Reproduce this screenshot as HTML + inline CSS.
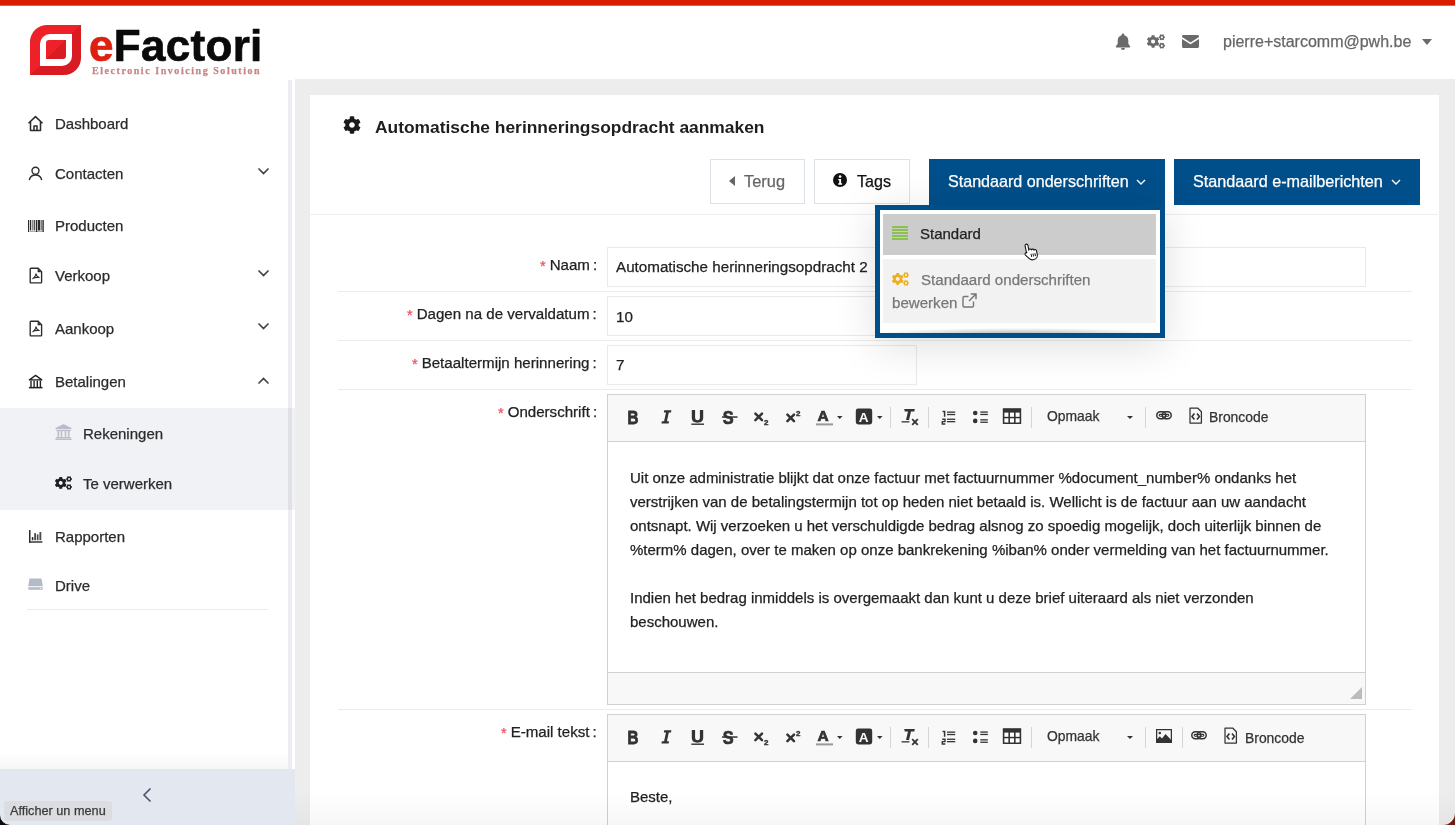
<!DOCTYPE html>
<html><head><meta charset="utf-8">
<style>
*{box-sizing:border-box;margin:0;padding:0}
html,body{width:1455px;height:825px;overflow:hidden;background:#fff;font-family:"Liberation Sans",sans-serif;color:#222}
body div{-webkit-text-stroke:0.25px currentColor}
.abs,.side,.lbl,.inp,.etxt,.tt{will-change:transform}
.abs{position:absolute}
#topbar{left:0;top:0;width:1455px;height:6px;background:linear-gradient(#d91e00 0,#d91e00 4px,#c81b00 5px,#f3b3a8 6px)}
#main{left:295px;top:79px;width:1160px;height:746px;background:#ededed}
#strip{left:288px;top:80px;width:4px;height:689px;background:rgba(0,20,60,0.075)}
#card{left:310px;top:95px;width:1129px;height:740px;background:#fff}
.side{left:55px;font-size:15px;color:#2b2b2b;white-space:nowrap;line-height:1}
.sico{position:absolute}
.chev{position:absolute;left:258px}
#sub{left:0;top:408px;width:295px;height:102px;background:#f1f2f6}
#sep{left:27px;top:609px;width:241px;height:1px;background:#e9ebef}
#bottombar{left:0;top:769px;width:295px;height:56px;background:#e3e7ef}
#tip{left:4px;top:801px;width:108px;height:20px;background:#dcdde0;border-radius:3px;font-size:12.7px;color:#3a3a3a;padding:3px 0 0 6px;white-space:nowrap}
.hdr{font-size:16px;color:#666;white-space:nowrap;line-height:1}
.btn{position:absolute;top:159px;height:45px;border:1px solid #dde0e6;background:#fff}
.bbtn{position:absolute;top:159px;height:46px;background:#004f8a;color:#fff;font-size:16.1px;white-space:nowrap}
.lbl{position:absolute;font-size:15.1px;color:#222;white-space:nowrap;line-height:1;text-align:right}
.lbl .ast{color:#e8535e;font-size:14.5px;margin-right:4px;position:relative;top:1px}
.lbl .col{margin-left:3px}
.hr{position:absolute;left:338px;width:1074px;height:1px;background:#ececec}
.inp{position:absolute;left:607px;height:40px;border:1px solid #e9eaee;background:#fff;font-size:15.2px;color:#222;padding-left:8px;line-height:1;white-space:nowrap}
.ed{position:absolute;left:607px;width:759px;border:1px solid #d1d1d1;background:#fff}
.tb{position:absolute;left:0;top:0;width:757px;height:47px;background:#f8f8f8;border-bottom:1px solid #d1d1d1}
.ico{position:absolute}
.tsep{position:absolute;top:13px;width:1px;height:20px;background:#d1d1d1}
.tt{position:absolute;font-size:13.9px;color:#333;white-space:nowrap;line-height:1}
.etxt{position:absolute;left:22px;font-size:15px;color:#222;line-height:24px;white-space:nowrap}
</style></head><body>
<div id="topbar" class="abs"></div>

<!-- logo -->
<svg class="abs" style="left:30px;top:24px" width="52" height="52" viewBox="0 0 52 52">
 <defs><linearGradient id="lg" x1="0" y1="0" x2="1" y2="1"><stop offset="0.5" stop-color="#ee2028"/><stop offset="0.5" stop-color="#d91c24"/></linearGradient></defs>
 <path d="M18 1 H51 V34 A17 17 0 0 1 34 51 H0 V18 A17 17 0 0 1 18 1 Z" fill="url(#lg)"/>
 <path d="M20 10 H42 V32 A10 10 0 0 1 32 42 H10 V20 A10 10 0 0 1 20 10 Z" fill="#fff"/>
 <path d="M19 16 H36 V32 A3 3 0 0 1 33 35 H16 V19 A3 3 0 0 1 19 16 Z" fill="url(#lg)"/>
</svg>
<div class="abs" style="left:89px;top:24px;font-size:44px;font-weight:bold;line-height:1;letter-spacing:0.3px;-webkit-text-stroke:0.7px currentColor;white-space:nowrap"><span style="color:#dd2010">e</span><span style="color:#0a0a0a;-webkit-text-stroke:0.7px #0a0a0a">Factori</span></div>
<div class="abs" style="left:92px;top:66px;font-family:'Liberation Serif',serif;font-size:10px;font-weight:bold;letter-spacing:1.55px;color:#c98585;white-space:nowrap;line-height:1">Electronic Invoicing Solution</div>

<!-- header right -->
<svg class="abs" style="left:1115px;top:33px" width="16" height="17" viewBox="0 0 16 17"><path d="M8 0.5c.8 0 1.3.6 1.3 1.3v.5c2.4.5 4 2.6 4 5.1v3.3l1.8 2.6c.3.5 0 1.2-.6 1.2H1.5c-.6 0-.9-.7-.6-1.2l1.8-2.6V7.4c0-2.5 1.6-4.6 4-5.1v-.5C6.7 1.1 7.2.5 8 .5zM6 15h4a2 2 0 0 1-4 0z" fill="#6a6a6a"/></svg>
<svg class="abs" style="left:1147px;top:34px" width="18" height="15" viewBox="0 0 640 512"><path fill="#6a6a6a" d="M512.1 191l-8.2 14.3c-3 5.3-9.4 7.5-15.1 5.4-11.8-4.4-22.6-10.7-32.1-18.6-4.6-3.8-5.8-10.5-2.8-15.7l8.2-14.3c-6.9-8-12.300-17.3-15.9-27.4h-16.5c-6 0-11.2-4.3-12.2-10.3-2-12-2.1-24.6 0-37.1 1-6 6.2-10.4 12.2-10.4h16.5c3.6-10.1 9-19.4 15.9-27.4l-8.2-14.3c-3-5.2-1.9-11.9 2.8-15.700 9.5-7.9 20.4-14.2 32.1-18.6 5.7-2.1 12.1.1 15.1 5.4l8.2 14.3c10.5-1.9 21.2-1.9 31.7 0L552 6.3c3-5.3 9.4-7.5 15.1-5.4 11.8 4.4 22.6 10.7 32.1 18.6 4.6 3.8 5.8 10.5 2.8 15.7l-8.2 14.3c6.9 8 12.3 17.3 15.9 27.4h16.5c6 0 11.2 4.3 12.2 10.3 2 12 2.1 24.6 0 37.1-1 6-6.2 10.4-12.2 10.4h-16.5c-3.6 10.1-9 19.4-15.9 27.4l8.2 14.3c3 5.2 1.9 11.9-2.8 15.7-9.5 7.9-20.4 14.2-32.1 18.6-5.7 2.1-12.1-.1-15.1-5.4l-8.2-14.3c-10.4 1.9-21.2 1.9-31.7 0zm-10.5-58.8c38.5 29.6 82.4-14.3 52.8-52.8-38.5-29.7-82.4 14.3-52.8 52.8zM386.3 286.1l33.7 16.8c10.1 5.8 14.5 18.1 10.5 29.1-8.9 24.2-26.4 46.4-42.6 65.8-7.4 8.9-20.2 11.1-30.3 5.3l-29.1-16.8c-16 13.7-34.6 24.6-54.9 31.7v33.6c0 11.6-8.3 21.6-19.7 23.6-24.6 4.2-50.4 4.4-75.9 0-11.5-2-20-11.9-20-23.6V418c-20.3-7.2-38.9-18-54.9-31.7L74 403c-10 5.8-22.9 3.6-30.3-5.3-16.2-19.4-33.3-41.6-42.2-65.7-4-10.9.4-23.2 10.5-29.1l33.3-16.8c-3.9-20.9-3.9-42.4 0-63.4L12 205.8c-10.1-5.8-14.6-18.1-10.5-29 8.9-24.2 26-46.4 42.2-65.8 7.4-8.9 20.2-11.1 30.3-5.3l29.1 16.8c16-13.7 34.6-24.6 54.9-31.7V57.1c0-11.5 8.2-21.5 19.6-23.5 24.6-4.2 50.5-4.4 76-.1 11.5 2 20 11.9 20 23.6v33.6c20.3 7.2 38.9 18 54.9 31.7l29.1-16.8c10-5.8 22.9-3.6 30.3 5.3 16.2 19.4 33.2 41.6 42.1 65.8 4 10.9.1 23.2-10 29.1l-33.7 16.8c3.9 21 3.9 42.5 0 63.5zm-117.6 21.1c59.2-77-28.7-164.9-105.7-105.7-59.2 77 28.7 164.9 105.7 105.7zm243.4 182.7l-8.2 14.3c-3 5.3-9.4 7.5-15.1 5.4-11.8-4.4-22.6-10.7-32.1-18.6-4.6-3.8-5.8-10.5-2.8-15.7l8.2-14.3c-6.9-8-12.3-17.3-15.9-27.4h-16.5c-6 0-11.2-4.3-12.2-10.3-2-12-2.1-24.6 0-37.1 1-6 6.2-10.4 12.2-10.4h16.5c3.6-10.1 9-19.4 15.9-27.4l-8.2-14.3c-3-5.2-1.9-11.9 2.8-15.7 9.5-7.9 20.4-14.2 32.1-18.6 5.7-2.1 12.1.1 15.1 5.4l8.2 14.3c10.5-1.9 21.2-1.9 31.7 0l8.2-14.3c3-5.3 9.4-7.5 15.1-5.4 11.8 4.4 22.6 10.7 32.1 18.6 4.6 3.8 5.8 10.5 2.8 15.7l-8.2 14.3c6.9 8 12.3 17.3 15.9 27.4h16.5c6 0 11.2 4.3 12.2 10.3 2 12 2.1 24.6 0 37.1-1 6-6.2 10.4-12.2 10.4h-16.5c-3.6 10.1-9 19.4-15.9 27.4l8.2 14.3c3 5.2 1.9 11.9-2.8 15.7-9.5 7.9-20.4 14.2-32.1 18.6-5.7 2.1-12.1-.1-15.1-5.4l-8.2-14.3c-10.4 1.9-21.2 1.9-31.7 0zM501.6 431c38.5 29.6 82.4-14.3 52.8-52.8-38.5-29.6-82.4 14.3-52.8 52.8z"/></svg>
<svg class="abs" style="left:1182px;top:35px" width="17" height="13" viewBox="0 0 17 13"><path d="M1.5 0h14C16.3 0 17 .7 17 1.5v.6L8.5 7.5 0 2.1v-.6C0 .7.7 0 1.5 0zM0 3.9l8.5 5.4L17 3.9v7.6c0 .8-.7 1.5-1.5 1.5h-14C.7 13 0 12.3 0 11.5z" fill="#6a6a6a"/></svg>
<div class="abs hdr" style="left:1223px;top:34px">pierre+starcomm@pwh.be</div>
<svg class="abs" style="left:1422px;top:39px" width="10" height="6" viewBox="0 0 10 6"><path d="M0 0h10L5 6z" fill="#6a6a6a"/></svg>

<!-- sidebar -->
<div id="sub" class="abs"></div>
<div id="strip" class="abs"></div>
<div class="abs side" style="top:115.5px">Dashboard</div>
<div class="abs side" style="top:165.5px">Contacten</div>
<div class="abs side" style="top:217.5px">Producten</div>
<div class="abs side" style="top:267.5px">Verkoop</div>
<div class="abs side" style="top:320.5px">Aankoop</div>
<div class="abs side" style="top:373.5px">Betalingen</div>
<div class="abs side" style="top:425.5px;left:83px">Rekeningen</div>
<div class="abs side" style="top:475.5px;left:83px">Te verwerken</div>
<div class="abs side" style="top:528.5px">Rapporten</div>
<div class="abs side" style="top:577.5px">Drive</div>

<svg class="abs" style="left:27px;top:115px" width="17" height="17" viewBox="0 0 17 17"><path d="M1.5 8.3L8.5 1.6l7 6.7M3.5 6.6v8.8h10V6.6M7 15.4v-4.4h3v4.4" fill="none" stroke="#2b2b2b" stroke-width="1.5" stroke-linejoin="round"/></svg>
<svg class="abs" style="left:28px;top:166px" width="15" height="15" viewBox="0 0 15 15"><circle cx="7.5" cy="4.8" r="3.5" fill="none" stroke="#2b2b2b" stroke-width="1.4"/><path d="M1.3 14.2a6.3 6.3 0 0 1 12.4 0" fill="none" stroke="#2b2b2b" stroke-width="1.4"/></svg>
<svg class="abs" style="left:28px;top:220px" width="16" height="12" viewBox="0 0 16 12"><g fill="#2b2b2b"><rect x="0" y="0" width="1.2" height="12"/><rect x="2" y="0" width="1" height="10.5"/><rect x="3.6" y="0" width="2" height="10.5" opacity=".55"/><rect x="6.2" y="0" width="1" height="10.5"/><rect x="8" y="0" width="1.2" height="12"/><rect x="9.8" y="0" width="2.4" height="10.5"/><rect x="12.8" y="0" width="0.8" height="10.5"/><rect x="14.4" y="0" width="1.4" height="12"/><rect x="2" y="11" width="12" height="1" opacity=".4"/></g></svg>
<svg class="abs" style="left:29px;top:267px" width="14" height="17" viewBox="0 0 14 17"><path d="M1.9 1.2h7.2l3.5 3.6v10.4c0 .4-.3.7-.7.7H1.9c-.4 0-.7-.3-.7-.7V1.9c0-.4.3-.7.7-.7z" fill="none" stroke="#2b2b2b" stroke-width="1.35"/><path d="M8.6 1.5v3.8h3.7z" fill="#2b2b2b"/><path d="M7 6.8c-.3 1.9-1.2 3.7-3.2 4.9M7 6.8c.4 1.8 1.5 3.2 3.3 3.6M4.4 11.1c1.6-.7 3.4-.9 5.2-.6" fill="none" stroke="#2b2b2b" stroke-width="1.05" stroke-linecap="round"/></svg>
<svg class="abs" style="left:29px;top:320px" width="14" height="17" viewBox="0 0 14 17"><path d="M1.9 1.2h7.2l3.5 3.6v10.4c0 .4-.3.7-.7.7H1.9c-.4 0-.7-.3-.7-.7V1.9c0-.4.3-.7.7-.7z" fill="none" stroke="#2b2b2b" stroke-width="1.35"/><path d="M8.6 1.5v3.8h3.7z" fill="#2b2b2b"/><path d="M7 6.8c-.3 1.9-1.2 3.7-3.2 4.9M7 6.8c.4 1.8 1.5 3.2 3.3 3.6M4.4 11.1c1.6-.7 3.4-.9 5.2-.6" fill="none" stroke="#2b2b2b" stroke-width="1.05" stroke-linecap="round"/></svg>
<svg class="abs" style="left:28px;top:374px" width="15" height="15" viewBox="0 0 15 15"><g fill="none" stroke="#222" stroke-width="1.3" stroke-linejoin="round"><path d="M1.4 5.9L7.6 1.4l6.2 4.5z"/></g><g fill="#222"><rect x="2.3" y="6.6" width="1.4" height="6.6"/><rect x="5.4" y="6.6" width="1.4" height="6.6"/><rect x="8.6" y="6.6" width="1.4" height="6.6"/><rect x="11.7" y="6.6" width="1.4" height="6.6"/><rect x="0.9" y="12.9" width="13.6" height="1.5"/></g></svg>
<svg class="abs" style="left:55px;top:424px" width="17" height="16" viewBox="0 0 17 16"><g fill="#b8bec9"><path d="M8.5 0L16.5 4v1.3H.5V4z"/><rect x="1.3" y="6" width="14.4" height="1.2"/><rect x="2.5" y="7.2" width="1.6" height="5.6"/><rect x="5.7" y="7.2" width="1.6" height="5.6"/><rect x="9.7" y="7.2" width="1.6" height="5.6"/><rect x="12.9" y="7.2" width="1.6" height="5.6"/><rect x="1.2" y="13" width="14.6" height="1.2"/><rect x="0.4" y="14.5" width="16.2" height="1.5"/></g></svg>
<svg class="abs" style="left:55px;top:476px" width="17" height="14" viewBox="0 0 640 512"><path fill="#1f1f1f" d="M512.1 191l-8.2 14.3c-3 5.3-9.4 7.5-15.1 5.4-11.8-4.4-22.6-10.7-32.1-18.6-4.6-3.8-5.8-10.5-2.8-15.7l8.2-14.3c-6.9-8-12.300-17.3-15.9-27.4h-16.5c-6 0-11.2-4.3-12.2-10.3-2-12-2.1-24.6 0-37.1 1-6 6.2-10.4 12.2-10.4h16.5c3.6-10.1 9-19.4 15.9-27.4l-8.2-14.3c-3-5.2-1.9-11.9 2.8-15.700 9.5-7.9 20.4-14.2 32.1-18.6 5.7-2.1 12.1.1 15.1 5.4l8.2 14.3c10.5-1.9 21.2-1.9 31.7 0L552 6.3c3-5.3 9.4-7.5 15.1-5.4 11.8 4.4 22.6 10.7 32.1 18.6 4.6 3.8 5.8 10.5 2.8 15.7l-8.2 14.3c6.9 8 12.3 17.3 15.9 27.4h16.5c6 0 11.2 4.3 12.2 10.3 2 12 2.1 24.6 0 37.1-1 6-6.2 10.4-12.2 10.4h-16.5c-3.6 10.1-9 19.4-15.9 27.4l8.2 14.3c3 5.2 1.9 11.9-2.8 15.7-9.5 7.9-20.4 14.2-32.1 18.6-5.7 2.1-12.1-.1-15.1-5.4l-8.2-14.3c-10.4 1.9-21.2 1.9-31.7 0zm-10.5-58.8c38.5 29.6 82.4-14.3 52.8-52.8-38.5-29.7-82.4 14.3-52.8 52.8zM386.3 286.1l33.7 16.8c10.1 5.8 14.5 18.1 10.5 29.1-8.9 24.2-26.4 46.4-42.6 65.8-7.4 8.9-20.2 11.1-30.3 5.3l-29.1-16.8c-16 13.7-34.6 24.6-54.9 31.7v33.6c0 11.6-8.3 21.6-19.7 23.6-24.6 4.2-50.4 4.4-75.9 0-11.5-2-20-11.9-20-23.6V418c-20.3-7.2-38.9-18-54.9-31.7L74 403c-10 5.8-22.9 3.6-30.3-5.3-16.2-19.4-33.3-41.6-42.2-65.7-4-10.9.4-23.2 10.5-29.1l33.3-16.8c-3.9-20.9-3.9-42.4 0-63.4L12 205.8c-10.1-5.8-14.6-18.1-10.5-29 8.9-24.2 26-46.4 42.2-65.8 7.4-8.9 20.2-11.1 30.3-5.3l29.1 16.8c16-13.7 34.6-24.6 54.9-31.7V57.1c0-11.5 8.2-21.5 19.6-23.5 24.6-4.2 50.5-4.4 76-.1 11.5 2 20 11.9 20 23.6v33.6c20.3 7.2 38.9 18 54.9 31.7l29.1-16.8c10-5.8 22.9-3.6 30.3 5.3 16.2 19.4 33.2 41.6 42.1 65.8 4 10.9.1 23.2-10 29.1l-33.7 16.8c3.9 21 3.9 42.5 0 63.5zm-117.6 21.1c59.2-77-28.7-164.9-105.7-105.7-59.2 77 28.7 164.9 105.7 105.7zm243.4 182.7l-8.2 14.3c-3 5.3-9.4 7.5-15.1 5.4-11.8-4.4-22.6-10.7-32.1-18.6-4.6-3.8-5.8-10.5-2.8-15.7l8.2-14.3c-6.9-8-12.3-17.3-15.9-27.4h-16.5c-6 0-11.2-4.3-12.2-10.3-2-12-2.1-24.6 0-37.1 1-6 6.2-10.4 12.2-10.4h16.5c3.6-10.1 9-19.4 15.9-27.4l-8.2-14.3c-3-5.2-1.9-11.9 2.8-15.7 9.5-7.9 20.4-14.2 32.1-18.6 5.7-2.1 12.1.1 15.1 5.4l8.2 14.3c10.5-1.9 21.2-1.9 31.7 0l8.2-14.3c3-5.3 9.4-7.5 15.1-5.4 11.8 4.4 22.6 10.7 32.1 18.6 4.6 3.8 5.8 10.5 2.8 15.7l-8.2 14.3c6.9 8 12.3 17.3 15.9 27.4h16.5c6 0 11.2 4.3 12.2 10.3 2 12 2.1 24.6 0 37.1-1 6-6.2 10.4-12.2 10.4h-16.5c-3.6 10.1-9 19.4-15.9 27.4l8.2 14.3c3 5.2 1.9 11.9-2.8 15.7-9.5 7.9-20.4 14.2-32.1 18.6-5.7 2.1-12.1-.1-15.1-5.4l-8.2-14.3c-10.4 1.9-21.2 1.9-31.7 0zM501.6 431c38.5 29.6 82.4-14.3 52.8-52.8-38.5-29.6-82.4 14.3-52.8 52.8z"/></svg>
<svg class="abs" style="left:29px;top:530px" width="14" height="13" viewBox="0 0 14 13"><g fill="#2b2b2b"><rect x="0" y="0" width="1.5" height="12.6"/><rect x="0" y="11.3" width="13.4" height="1.4"/><rect x="2.8" y="7" width="1.6" height="3.3" rx=".6"/><rect x="5.2" y="3" width="1.8" height="7.3" rx=".6" opacity=".85"/><rect x="7.8" y="4.3" width="1.7" height="6" rx=".6" opacity=".85"/><rect x="10.4" y="2" width="1.9" height="8.3" rx=".6" opacity=".85"/></g></svg>
<svg class="abs" style="left:28px;top:578px" width="15" height="12" viewBox="0 0 15 12"><path d="M1.5 0.5h12l1.3 7.8H0.2z" fill="#b4bac6"/><path d="M0.2 9.3h14.6v1.5a1 1 0 0 1-1 1H1.2a1 1 0 0 1-1-1z" fill="#b4bac6"/><circle cx="12.4" cy="10.5" r=".6" fill="#fff"/></svg>
<svg class="abs" style="left:258px;top:168px" width="11" height="7" viewBox="0 0 11 7"><path d="M1 1l4.5 4.5L10 1" fill="none" stroke="#444" stroke-width="1.7" stroke-linecap="round"/></svg>
<svg class="abs" style="left:258px;top:270px" width="11" height="7" viewBox="0 0 11 7"><path d="M1 1l4.5 4.5L10 1" fill="none" stroke="#444" stroke-width="1.7" stroke-linecap="round"/></svg>
<svg class="abs" style="left:258px;top:323px" width="11" height="7" viewBox="0 0 11 7"><path d="M1 1l4.5 4.5L10 1" fill="none" stroke="#444" stroke-width="1.7" stroke-linecap="round"/></svg>
<svg class="abs" style="left:258px;top:377px" width="11" height="7" viewBox="0 0 11 7"><path d="M1 6l4.5-4.5L10 6" fill="none" stroke="#444" stroke-width="1.7" stroke-linecap="round"/></svg>
<div id="sep" class="abs"></div>
<div id="bottombar" class="abs"></div>
<svg class="abs" style="left:142px;top:787px" width="10" height="16" viewBox="0 0 10 16"><path d="M8.5 1.5L2 8l6.5 6.5" fill="none" stroke="#4a5366" stroke-width="1.6"/></svg>
<div id="tip" class="abs">Afficher un menu</div>

<!-- main -->
<div id="main" class="abs"></div>
<div id="card" class="abs"></div>
<!-- card header -->
<svg class="abs" style="left:342.5px;top:116px" width="18" height="18" viewBox="0 0 512 512"><path fill="#1a1a1a" d="M487.4 315.7l-42.6-24.6c4.3-23.2 4.3-47 0-70.2l42.6-24.6c4.9-2.8 7.1-8.6 5.5-14-11.1-35.6-30-67.8-54.7-94.6-3.8-4.1-10-5.1-14.8-2.3L380.8 110c-17.9-15.4-38.5-27.3-60.8-35.1V25.8c0-5.6-3.9-10.5-9.4-11.7-36.7-8.2-74.3-7.8-109.2 0-5.5 1.2-9.4 6.1-9.4 11.7V75c-22.2 7.9-42.8 19.8-60.8 35.1L88.7 85.5c-4.9-2.8-11-1.9-14.8 2.3-24.7 26.7-43.6 58.9-54.7 94.6-1.7 5.4.6 11.2 5.5 14L67.3 221c-4.3 23.2-4.3 47 0 70.2l-42.6 24.6c-4.9 2.8-7.1 8.6-5.5 14 11.1 35.6 30 67.8 54.7 94.6 3.8 4.1 10 5.1 14.8 2.3l42.6-24.6c17.9 15.4 38.5 27.3 60.8 35.1v49.2c0 5.6 3.9 10.5 9.4 11.7 36.7 8.2 74.3 7.8 109.2 0 5.5-1.2 9.4-6.1 9.4-11.7v-49.2c22.2-7.9 42.8-19.8 60.8-35.1l42.6 24.6c4.9 2.8 11 1.9 14.8-2.3 24.7-26.7 43.6-58.9 54.7-94.6 1.5-5.5-.7-11.3-5.6-14.1zM256 336c-44.1 0-80-35.9-80-80s35.9-80 80-80 80 35.9 80 80-35.9 80-80 80z"/></svg>
<div class="abs" style="left:375px;top:119px;font-size:17.4px;font-weight:bold;color:#1e1e1e;-webkit-text-stroke:0;white-space:nowrap;line-height:1">Automatische herinneringsopdracht aanmaken</div>
<div class="btn" style="left:710px;width:95px"></div>
<svg class="abs" style="left:729px;top:176px" width="6" height="10" viewBox="0 0 6 10"><path d="M6 0v10L0 5z" fill="#666"/></svg>
<div class="abs" style="left:744px;top:173px;font-size:16.4px;color:#666;white-space:nowrap;line-height:1">Terug</div>
<div class="btn" style="left:814px;width:96px"></div>
<svg class="abs" style="left:833px;top:173px" width="14" height="14" viewBox="0 0 14 14"><circle cx="7" cy="7" r="7" fill="#111"/><circle cx="7.1" cy="3.6" r="1.3" fill="#fff"/><path d="M5.2 5.9h2.9v4.4h1v1.4H5.2v-1.4h1V7.3h-1z" fill="#fff"/></svg>
<div class="abs" style="left:857px;top:173px;font-size:16.1px;color:#111;white-space:nowrap;line-height:1">Tags</div>
<div class="bbtn" style="left:929px;width:236px;height:52px"></div>
<div class="abs" style="left:948px;top:173px;font-size:16.1px;color:#fff;white-space:nowrap;line-height:1">Standaard onderschriften</div>
<svg class="abs" style="left:1135.5px;top:178.5px" width="10" height="6" viewBox="0 0 10 6"><path d="M1 1l4 4 4-4" fill="none" stroke="#fff" stroke-width="1.4"/></svg>
<div class="bbtn" style="left:1174px;width:246px"></div>
<div class="abs" style="left:1193px;top:173px;font-size:16.2px;color:#fff;white-space:nowrap;line-height:1">Standaard e-mailberichten</div>
<svg class="abs" style="left:1390.5px;top:178.5px" width="10" height="6" viewBox="0 0 10 6"><path d="M1 1l4 4 4-4" fill="none" stroke="#fff" stroke-width="1.4"/></svg>
<div class="abs" style="left:310px;top:214px;width:1128px;height:1px;background:#eeeeee"></div>

<!-- form -->
<div class="hr" style="top:291px"></div>
<div class="hr" style="top:340px"></div>
<div class="hr" style="top:389px"></div>
<div class="hr" style="top:709px"></div>
<div class="lbl" style="right:858px;top:257px"><span class="ast">*</span>Naam<span class="col">:</span></div>
<div class="lbl" style="right:858px;top:306px"><span class="ast">*</span>Dagen na de vervaldatum<span class="col">:</span></div>
<div class="lbl" style="right:858px;top:355px"><span class="ast">*</span>Betaaltermijn herinnering<span class="col">:</span></div>
<div class="lbl" style="right:858px;top:404px"><span class="ast">*</span>Onderschrift<span class="col">:</span></div>
<div class="lbl" style="right:858px;top:724px"><span class="ast">*</span>E-mail tekst<span class="col">:</span></div>
<div class="inp" style="top:247px;width:759px;padding-top:11px">Automatische herinneringsopdracht 2</div>
<div class="inp" style="top:296px;width:310px;padding-top:11.5px">10</div>
<div class="inp" style="top:345px;width:310px;padding-top:11px">7</div>

<!-- editor 1 -->
<div class="ed" style="top:394px;height:311px">
 <div class="tb" id="tb1"></div>
 <div class="etxt" style="top:71px">Uit onze administratie blijkt dat onze factuur met factuurnummer %document_number% ondanks het<br>verstrijken van de betalingstermijn tot op heden niet betaald is. Wellicht is de factuur aan uw aandacht<br>ontsnapt. Wij verzoeken u het verschuldigde bedrag alsnog zo spoedig mogelijk, doch uiterlijk binnen de<br>%term% dagen, over te maken op onze bankrekening %iban% onder vermelding van het factuurnummer.<br><br>Indien het bedrag inmiddels is overgemaakt dan kunt u deze brief uiteraard als niet verzonden<br>beschouwen.</div>
 <div class="abs" style="left:0;top:277px;width:757px;height:32px;background:#f8f8f8;border-top:1px solid #d1d1d1"></div>
 <svg class="abs" style="left:742px;top:292px" width="12" height="12" viewBox="0 0 12 12"><path d="M12 0v12H0z" fill="#bcbcbc"/></svg>
</div>
<!-- editor 2 -->
<div class="ed" style="top:714px;height:130px">
 <div class="tb" id="tb2"></div>
 <div class="etxt" style="top:70px">Beste,</div>
</div>
<!--TB-->
<svg class="abs" style="left:627px;top:409px" width="14" height="16" viewBox="0 0 14 16"><text x="0.6" y="14.8" font-family="Liberation Sans" font-weight="bold" font-size="19" fill="#333" stroke="#333" stroke-width="0.9" transform="scale(0.8,1)">B</text></svg>
<svg class="abs" style="left:659px;top:409px" width="14" height="16" viewBox="0 0 14 16"><path d="M5.2 1.2h7.2l-.4 2.2h-2.2l-1.9 8.9h2.2l-.5 2.2H2.4l.5-2.2h2.2L7 3.4H4.8z" fill="#333"/></svg>
<svg class="abs" style="left:690px;top:409px" width="15" height="17" viewBox="0 0 15 17"><path d="M1.8 1h3.3v7.4c0 1.8.9 2.8 2.4 2.8s2.4-1 2.4-2.8V1h3.3v7.6c0 3.4-2.1 5.2-5.7 5.2S1.8 12 1.8 8.6z" fill="#333"/><rect x="1.3" y="14.5" width="12.7" height="1.4" fill="#333"/></svg>
<svg class="abs" style="left:721px;top:409px" width="17" height="16" viewBox="0 0 17 16"><text x="2" y="14.8" font-family="Liberation Sans" font-weight="bold" font-size="18.6" fill="#333" stroke="#333" stroke-width="0.7" transform="scale(0.88,1)">S</text><rect x="1" y="7.3" width="15.5" height="1.5" fill="#333"/></svg>
<svg class="abs" style="left:753px;top:411px" width="18" height="15" viewBox="0 0 18 15"><path d="M2.4 2.6l6.6 6.6M9 2.6L2.4 9.2" stroke="#333" stroke-width="2.5" stroke-linecap="round"/><text x="10.9" y="13.6" font-family="Liberation Sans" font-weight="bold" font-size="8" fill="#333" stroke="#333" stroke-width="0.4">2</text></svg>
<svg class="abs" style="left:785px;top:410px" width="18" height="14" viewBox="0 0 18 14"><path d="M2.4 4.6l6.6 6.6M9 4.6L2.4 11.2" stroke="#333" stroke-width="2.5" stroke-linecap="round"/><text x="10.9" y="6.4" font-family="Liberation Sans" font-weight="bold" font-size="8" fill="#333" stroke="#333" stroke-width="0.4">2</text></svg>
<svg class="abs" style="left:815px;top:409px" width="19" height="17" viewBox="0 0 19 17"><text x="2.6" y="11.9" font-family="Liberation Sans" font-weight="bold" font-size="15.4" fill="#333" stroke="#333" stroke-width="0.7">A</text><rect x="1" y="14.4" width="17" height="2" fill="#999"/></svg>
<svg class="abs" style="left:837px;top:416px" width="6" height="4" viewBox="0 0 6 4"><path d="M0 0h5.5L2.75 3z" fill="#333"/></svg>
<svg class="abs" style="left:855px;top:408px" width="18" height="17" viewBox="0 0 18 17"><rect x="0.8" y="0.5" width="16.4" height="16" rx="2.4" fill="#333"/><text x="3.8" y="13.5" font-family="Liberation Sans" font-weight="bold" font-size="13.6" fill="#fff">A</text></svg>
<svg class="abs" style="left:877px;top:416px" width="6" height="4" viewBox="0 0 6 4"><path d="M0 0h5.5L2.75 3z" fill="#333"/></svg>
<div class="abs" style="left:890px;top:407px;width:1px;height:21px;background:#d5d5d5"></div>
<svg class="abs" style="left:901px;top:408px" width="18" height="18" viewBox="0 0 18 18"><path d="M3.2 1h10.6l-.5 2.4H10l-2 8.6H5l2-8.6H3.8z" fill="#333"/><rect x="0.6" y="13.2" width="7.8" height="1.3" fill="#333"/><path d="M11.2 11.2l5.6 5.6M16.8 11.2l-5.6 5.6" stroke="#333" stroke-width="1.8"/></svg>
<div class="abs" style="left:928px;top:407px;width:1px;height:21px;background:#d5d5d5"></div>
<svg class="abs" style="left:941px;top:410px" width="15" height="15" viewBox="0 0 15 15"><path d="M1.6 1.4h2v5.4" stroke="#333" stroke-width="1.5" fill="none"/><path d="M1.2 9.3h2.8v2.3H1.3v2.4h3" stroke="#333" stroke-width="1.4" fill="none"/><rect x="6" y="1.5" width="8.2" height="1.3" fill="#333"/><rect x="6" y="3.9" width="8.2" height="1.3" fill="#333"/><rect x="6" y="8.6" width="8.2" height="1.3" fill="#333"/><rect x="6" y="11" width="8.2" height="1.3" fill="#333"/></svg>
<svg class="abs" style="left:972px;top:410px" width="17" height="14" viewBox="0 0 17 14"><circle cx="3.2" cy="3" r="2.3" fill="#333"/><circle cx="3.2" cy="10.9" r="2.3" fill="#333"/><rect x="8.3" y="1.4" width="7.5" height="1.3" fill="#333"/><rect x="8.3" y="3.8" width="7.5" height="1.3" fill="#333"/><rect x="8.3" y="9.2" width="7.5" height="1.3" fill="#333"/><rect x="8.3" y="11.6" width="7.5" height="1.3" fill="#333"/></svg>
<svg class="abs" style="left:1002px;top:408px" width="20" height="17" viewBox="0 0 20 17"><rect x="0.8" y="0.2" width="18.4" height="15.8" fill="#333"/><g fill="#fff"><rect x="2.4" y="4.6" width="4" height="4.2"/><rect x="8" y="4.6" width="4" height="4.2"/><rect x="13.6" y="4.6" width="4" height="4.2"/><rect x="2.4" y="10.3" width="4" height="4.2"/><rect x="8" y="10.3" width="4" height="4.2"/><rect x="13.6" y="10.3" width="4" height="4.2"/></g></svg>
<div class="abs" style="left:1031px;top:407px;width:1px;height:21px;background:#d5d5d5"></div>
<div class="tt" style="left:1047px;top:410px">Opmaak</div>
<svg class="abs" style="left:1127px;top:416px" width="6" height="4" viewBox="0 0 6 4"><path d="M0 0h6L3 3z" fill="#333"/></svg>
<div class="abs" style="left:1145px;top:407px;width:1px;height:21px;background:#d5d5d5"></div>
<svg class="abs" style="left:1156px;top:411px" width="16" height="9" viewBox="0 0 16 9"><rect x="0.8" y="0.8" width="9" height="7" rx="3.5" fill="none" stroke="#333" stroke-width="1.5"/><rect x="6.2" y="0.8" width="9" height="7" rx="3.5" fill="none" stroke="#333" stroke-width="1.5"/><rect x="3.2" y="3.4" width="9.6" height="1.8" rx=".9" fill="none" stroke="#333" stroke-width="1.1"/></svg>
<svg class="abs" style="left:1189px;top:407px" width="14" height="17" viewBox="0 0 14 17"><path d="M1 1h7.6L12.4 4.8V16H1z" fill="none" stroke="#333" stroke-width="1.25" stroke-linejoin="round"/><path d="M5.4 6.6L3 9.6l2.4 3M8 6.6l2.4 3L8 12.6" fill="none" stroke="#333" stroke-width="1.6"/></svg>
<div class="tt" style="left:1209px;top:411px">Broncode</div>
<svg class="abs" style="left:627px;top:729px" width="14" height="16" viewBox="0 0 14 16"><text x="0.6" y="14.8" font-family="Liberation Sans" font-weight="bold" font-size="19" fill="#333" stroke="#333" stroke-width="0.9" transform="scale(0.8,1)">B</text></svg>
<svg class="abs" style="left:659px;top:729px" width="14" height="16" viewBox="0 0 14 16"><path d="M5.2 1.2h7.2l-.4 2.2h-2.2l-1.9 8.9h2.2l-.5 2.2H2.4l.5-2.2h2.2L7 3.4H4.8z" fill="#333"/></svg>
<svg class="abs" style="left:690px;top:729px" width="15" height="17" viewBox="0 0 15 17"><path d="M1.8 1h3.3v7.4c0 1.8.9 2.8 2.4 2.8s2.4-1 2.4-2.8V1h3.3v7.6c0 3.4-2.1 5.2-5.7 5.2S1.8 12 1.8 8.6z" fill="#333"/><rect x="1.3" y="14.5" width="12.7" height="1.4" fill="#333"/></svg>
<svg class="abs" style="left:721px;top:729px" width="17" height="16" viewBox="0 0 17 16"><text x="2" y="14.8" font-family="Liberation Sans" font-weight="bold" font-size="18.6" fill="#333" stroke="#333" stroke-width="0.7" transform="scale(0.88,1)">S</text><rect x="1" y="7.3" width="15.5" height="1.5" fill="#333"/></svg>
<svg class="abs" style="left:753px;top:731px" width="18" height="15" viewBox="0 0 18 15"><path d="M2.4 2.6l6.6 6.6M9 2.6L2.4 9.2" stroke="#333" stroke-width="2.5" stroke-linecap="round"/><text x="10.9" y="13.6" font-family="Liberation Sans" font-weight="bold" font-size="8" fill="#333" stroke="#333" stroke-width="0.4">2</text></svg>
<svg class="abs" style="left:785px;top:730px" width="18" height="14" viewBox="0 0 18 14"><path d="M2.4 4.6l6.6 6.6M9 4.6L2.4 11.2" stroke="#333" stroke-width="2.5" stroke-linecap="round"/><text x="10.9" y="6.4" font-family="Liberation Sans" font-weight="bold" font-size="8" fill="#333" stroke="#333" stroke-width="0.4">2</text></svg>
<svg class="abs" style="left:815px;top:729px" width="19" height="17" viewBox="0 0 19 17"><text x="2.6" y="11.9" font-family="Liberation Sans" font-weight="bold" font-size="15.4" fill="#333" stroke="#333" stroke-width="0.7">A</text><rect x="1" y="14.4" width="17" height="2" fill="#999"/></svg>
<svg class="abs" style="left:837px;top:736px" width="6" height="4" viewBox="0 0 6 4"><path d="M0 0h5.5L2.75 3z" fill="#333"/></svg>
<svg class="abs" style="left:855px;top:728px" width="18" height="17" viewBox="0 0 18 17"><rect x="0.8" y="0.5" width="16.4" height="16" rx="2.4" fill="#333"/><text x="3.8" y="13.5" font-family="Liberation Sans" font-weight="bold" font-size="13.6" fill="#fff">A</text></svg>
<svg class="abs" style="left:877px;top:736px" width="6" height="4" viewBox="0 0 6 4"><path d="M0 0h5.5L2.75 3z" fill="#333"/></svg>
<div class="abs" style="left:890px;top:727px;width:1px;height:21px;background:#d5d5d5"></div>
<svg class="abs" style="left:901px;top:728px" width="18" height="18" viewBox="0 0 18 18"><path d="M3.2 1h10.6l-.5 2.4H10l-2 8.6H5l2-8.6H3.8z" fill="#333"/><rect x="0.6" y="13.2" width="7.8" height="1.3" fill="#333"/><path d="M11.2 11.2l5.6 5.6M16.8 11.2l-5.6 5.6" stroke="#333" stroke-width="1.8"/></svg>
<div class="abs" style="left:928px;top:727px;width:1px;height:21px;background:#d5d5d5"></div>
<svg class="abs" style="left:941px;top:730px" width="15" height="15" viewBox="0 0 15 15"><path d="M1.6 1.4h2v5.4" stroke="#333" stroke-width="1.5" fill="none"/><path d="M1.2 9.3h2.8v2.3H1.3v2.4h3" stroke="#333" stroke-width="1.4" fill="none"/><rect x="6" y="1.5" width="8.2" height="1.3" fill="#333"/><rect x="6" y="3.9" width="8.2" height="1.3" fill="#333"/><rect x="6" y="8.6" width="8.2" height="1.3" fill="#333"/><rect x="6" y="11" width="8.2" height="1.3" fill="#333"/></svg>
<svg class="abs" style="left:972px;top:730px" width="17" height="14" viewBox="0 0 17 14"><circle cx="3.2" cy="3" r="2.3" fill="#333"/><circle cx="3.2" cy="10.9" r="2.3" fill="#333"/><rect x="8.3" y="1.4" width="7.5" height="1.3" fill="#333"/><rect x="8.3" y="3.8" width="7.5" height="1.3" fill="#333"/><rect x="8.3" y="9.2" width="7.5" height="1.3" fill="#333"/><rect x="8.3" y="11.6" width="7.5" height="1.3" fill="#333"/></svg>
<svg class="abs" style="left:1002px;top:728px" width="20" height="17" viewBox="0 0 20 17"><rect x="0.8" y="0.2" width="18.4" height="15.8" fill="#333"/><g fill="#fff"><rect x="2.4" y="4.6" width="4" height="4.2"/><rect x="8" y="4.6" width="4" height="4.2"/><rect x="13.6" y="4.6" width="4" height="4.2"/><rect x="2.4" y="10.3" width="4" height="4.2"/><rect x="8" y="10.3" width="4" height="4.2"/><rect x="13.6" y="10.3" width="4" height="4.2"/></g></svg>
<div class="abs" style="left:1031px;top:727px;width:1px;height:21px;background:#d5d5d5"></div>
<div class="tt" style="left:1047px;top:730px">Opmaak</div>
<svg class="abs" style="left:1127px;top:736px" width="6" height="4" viewBox="0 0 6 4"><path d="M0 0h6L3 3z" fill="#333"/></svg>
<div class="abs" style="left:1145px;top:727px;width:1px;height:21px;background:#d5d5d5"></div>
<svg class="abs" style="left:1156px;top:729px" width="16" height="14" viewBox="0 0 16 14"><rect x="0.6" y="0.6" width="14.8" height="12.8" fill="none" stroke="#333" stroke-width="1.3"/><circle cx="3.8" cy="4" r="1.3" fill="#333"/><path d="M1 13V10.2l2.8-3 2.2 2.2 3.5-4.3 5.5 5.6V13z" fill="#333"/></svg>
<div class="abs" style="left:1182px;top:727px;width:1px;height:21px;background:#d5d5d5"></div>
<svg class="abs" style="left:1191px;top:731px" width="17" height="9" viewBox="0 0 17 9"><rect x="0.8" y="0.8" width="9" height="7" rx="3.5" fill="none" stroke="#333" stroke-width="1.5"/><rect x="6.2" y="0.8" width="9" height="7" rx="3.5" fill="none" stroke="#333" stroke-width="1.5"/><rect x="3.2" y="3.4" width="9.6" height="1.8" rx=".9" fill="none" stroke="#333" stroke-width="1.1"/></svg>
<svg class="abs" style="left:1224px;top:727px" width="14" height="17" viewBox="0 0 14 17"><path d="M1 1h7.6L12.4 4.8V16H1z" fill="none" stroke="#333" stroke-width="1.25" stroke-linejoin="round"/><path d="M5.4 6.6L3 9.6l2.4 3M8 6.6l2.4 3L8 12.6" fill="none" stroke="#333" stroke-width="1.6"/></svg>
<div class="tt" style="left:1245px;top:731.5px">Broncode</div>
<!--/TB-->
<!--DD-->
<div class="abs" style="left:875px;top:205px;width:290px;height:133px;background:#004f8a;box-shadow:0 8px 40px rgba(0,0,0,0.13)"></div>
<div class="abs" style="left:880px;top:210px;width:280px;height:123px;background:#fff;overflow:hidden">
 <div class="abs" style="left:3px;top:4px;width:273px;height:41px;background:#cccccc"></div>
 <div class="abs" style="left:3px;top:49px;width:273px;height:64px;background:#f2f2f2"></div>
 <div class="abs" style="left:0;top:116px;width:280px;height:10px;background:radial-gradient(ellipse 150px 6px at 140px 8px,rgba(0,0,0,.3),rgba(0,0,0,0))"></div>
</div>
<svg class="abs" style="left:892px;top:226px" width="16" height="14" viewBox="0 0 16 14"><g fill="#8cc152"><rect x="0" y="0" width="16" height="2"/><rect x="0" y="3" width="16" height="2"/><rect x="0" y="6" width="16" height="2"/><rect x="0" y="9" width="16" height="2"/><rect x="0" y="12" width="16" height="2"/></g></svg>
<div class="abs" style="left:920px;top:226px;font-size:15px;color:#222;white-space:nowrap;line-height:1">Standard</div>
<svg class="abs" style="left:892px;top:272px" width="17" height="14" viewBox="0 0 640 512"><path fill="#f0ad1e" d="M512.1 191l-8.2 14.3c-3 5.3-9.4 7.5-15.1 5.4-11.8-4.4-22.6-10.7-32.1-18.6-4.6-3.8-5.8-10.5-2.8-15.7l8.2-14.3c-6.9-8-12.300-17.3-15.9-27.4h-16.5c-6 0-11.2-4.3-12.2-10.3-2-12-2.1-24.6 0-37.1 1-6 6.2-10.4 12.2-10.4h16.5c3.6-10.1 9-19.4 15.9-27.4l-8.2-14.3c-3-5.2-1.9-11.9 2.8-15.700 9.5-7.9 20.4-14.2 32.1-18.6 5.7-2.1 12.1.1 15.1 5.4l8.2 14.3c10.5-1.9 21.2-1.9 31.7 0L552 6.3c3-5.3 9.4-7.5 15.1-5.4 11.8 4.4 22.6 10.7 32.1 18.6 4.6 3.8 5.8 10.5 2.8 15.7l-8.2 14.3c6.9 8 12.3 17.3 15.9 27.4h16.5c6 0 11.2 4.3 12.2 10.3 2 12 2.1 24.6 0 37.1-1 6-6.2 10.4-12.2 10.4h-16.5c-3.6 10.1-9 19.4-15.9 27.4l8.2 14.3c3 5.2 1.9 11.9-2.8 15.7-9.5 7.9-20.4 14.2-32.1 18.6-5.7 2.1-12.1-.1-15.1-5.4l-8.2-14.3c-10.4 1.9-21.2 1.9-31.7 0zm-10.5-58.8c38.5 29.6 82.4-14.3 52.8-52.8-38.5-29.7-82.4 14.3-52.8 52.8zM386.3 286.1l33.7 16.8c10.1 5.8 14.5 18.1 10.5 29.1-8.9 24.2-26.4 46.4-42.6 65.8-7.4 8.9-20.2 11.1-30.3 5.3l-29.1-16.8c-16 13.7-34.6 24.6-54.9 31.7v33.6c0 11.6-8.3 21.6-19.7 23.6-24.6 4.2-50.4 4.4-75.9 0-11.5-2-20-11.9-20-23.6V418c-20.3-7.2-38.9-18-54.9-31.7L74 403c-10 5.8-22.9 3.6-30.3-5.3-16.2-19.4-33.3-41.6-42.2-65.7-4-10.9.4-23.2 10.5-29.1l33.3-16.8c-3.9-20.9-3.9-42.4 0-63.4L12 205.8c-10.1-5.8-14.6-18.1-10.5-29 8.9-24.2 26-46.4 42.2-65.8 7.4-8.9 20.2-11.1 30.3-5.3l29.1 16.8c16-13.7 34.6-24.6 54.9-31.7V57.1c0-11.5 8.2-21.5 19.6-23.5 24.6-4.2 50.5-4.4 76-.1 11.5 2 20 11.9 20 23.6v33.6c20.3 7.2 38.9 18 54.9 31.7l29.1-16.8c10-5.8 22.9-3.6 30.3 5.3 16.2 19.4 33.2 41.6 42.1 65.8 4 10.9.1 23.2-10 29.1l-33.7 16.8c3.9 21 3.9 42.5 0 63.5zm-117.6 21.1c59.2-77-28.7-164.9-105.7-105.7-59.2 77 28.7 164.9 105.7 105.7zm243.4 182.7l-8.2 14.3c-3 5.3-9.4 7.5-15.1 5.4-11.8-4.4-22.6-10.7-32.1-18.6-4.6-3.8-5.8-10.5-2.8-15.7l8.2-14.3c-6.9-8-12.3-17.3-15.9-27.4h-16.5c-6 0-11.2-4.3-12.2-10.3-2-12-2.1-24.6 0-37.1 1-6 6.2-10.4 12.2-10.4h16.5c3.6-10.1 9-19.4 15.9-27.4l-8.2-14.3c-3-5.2-1.9-11.9 2.8-15.7 9.5-7.9 20.4-14.2 32.1-18.6 5.7-2.1 12.1.1 15.1 5.4l8.2 14.3c10.5-1.9 21.2-1.9 31.7 0l8.2-14.3c3-5.3 9.4-7.5 15.1-5.4 11.8 4.4 22.6 10.7 32.1 18.6 4.6 3.8 5.8 10.5 2.8 15.7l-8.2 14.3c6.9 8 12.3 17.3 15.9 27.4h16.5c6 0 11.2 4.3 12.2 10.3 2 12 2.1 24.6 0 37.1-1 6-6.2 10.4-12.2 10.4h-16.5c-3.6 10.1-9 19.4-15.9 27.4l8.2 14.3c3 5.2 1.9 11.9-2.8 15.7-9.5 7.9-20.4 14.2-32.1 18.6-5.7 2.1-12.1-.1-15.1-5.4l-8.2-14.3c-10.4 1.9-21.2 1.9-31.7 0zM501.6 431c38.5 29.6 82.4-14.3 52.8-52.8-38.5-29.6-82.4 14.3-52.8 52.8z"/></svg>
<div class="abs" style="left:921px;top:272px;font-size:15.1px;color:#777;white-space:nowrap;line-height:1">Standaard onderschriften</div>
<div class="abs" style="left:892px;top:295px;font-size:15.1px;color:#777;white-space:nowrap;line-height:1">bewerken</div>
<svg class="abs" style="left:962px;top:293px" width="15" height="15" viewBox="0 0 15 15"><path d="M11.5 8.5v4.3c0 .7-.5 1.2-1.2 1.2H2.2c-.7 0-1.2-.5-1.2-1.2V4.7c0-.7.5-1.2 1.2-1.2h4.3" fill="none" stroke="#777" stroke-width="1.4"/><path d="M8.8 1h5.2v5.2M14 1L7 8" fill="none" stroke="#777" stroke-width="1.5"/></svg>
<svg class="abs" style="left:1020px;top:240px" width="22" height="22" viewBox="0 0 22 22"><g transform="translate(3 2) scale(0.88) rotate(-12 9 11)"><path d="M5.5 1.5c.9 0 1.6.7 1.6 1.6v5.3c.3-.4.8-.6 1.3-.6.8 0 1.4.5 1.6 1.2.3-.3.7-.5 1.2-.5.8 0 1.5.6 1.6 1.4.3-.2.6-.3 1-.3.9 0 1.6.7 1.6 1.6v4.3c0 2.9-2.2 5-5 5H9.5c-1.6 0-3-.8-3.9-2.1L2.1 13.5c-.5-.8-.3-1.7.4-2.2.7-.5 1.6-.3 2.1.3l-.7-.9V3.1c0-.9.7-1.6 1.6-1.6z" fill="#fff" stroke="#111" stroke-width="1.2"/><path d="M8.6 13.5v3.5M10.8 13.5v3.5M13 13.5v3.5" stroke="#111" stroke-width="1.1"/></g></svg>
<!--/DD-->
<div class="abs" style="left:0;top:752px;width:288px;height:17px;background:linear-gradient(rgba(0,0,0,0),rgba(0,0,0,0.035))"></div>
<div class="abs" style="left:295px;top:790px;width:1160px;height:35px;background:linear-gradient(rgba(0,0,0,0),rgba(0,0,0,0.03))"></div>
<svg class="abs" style="left:0;top:815px" width="10" height="10" viewBox="0 0 10 10"><path d="M0 0A10 10 0 0 0 10 10H0z" fill="#0b0b0b"/></svg>
<svg class="abs" style="left:1443px;top:813px" width="12" height="12" viewBox="0 0 12 12"><path d="M12 0A12 12 0 0 1 0 12H12z" fill="#6e1a12"/></svg>
</body></html>
